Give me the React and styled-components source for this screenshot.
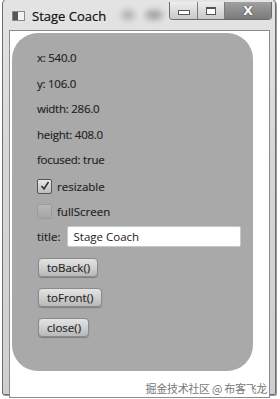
import React from 'react';
import styled, { createGlobalStyle } from 'styled-components';

const GlobalStyle = createGlobalStyle`
  html, body {
    margin: 0;
    padding: 0;
    background: #ffffff;
  }
  body {
    font-family: "Open Sans", "Liberation Sans", sans-serif;
  }
`;

const Page = styled.div`
  width: 280px;
  height: 399px;
  position: relative;
  background: #ffffff;
  overflow: hidden;
`;

const Frame = styled.div`
  position: absolute;
  left: 2px;
  top: -2px;
  width: 274px;
  height: 397px;
  box-sizing: border-box;
  border: 1px solid #6e6e6e;
  border-radius: 6px 6px 2px 2px;
  background: linear-gradient(180deg, #e4e4e4 0%, #d6d6d6 40%, #cfcfcf 100%);
  box-shadow: 1px 1px 0 #9a9a9a;
  display: flex;
  flex-direction: column;
  padding: 0 5px 6px 6px;
`;

const TitleBar = styled.div`
  height: 31px;
  display: flex;
  align-items: center;
  position: relative;
  flex-shrink: 0;
`;

const AppIcon = styled.div`
  width: 11px;
  height: 8px;
  margin: 2px 7px 0 3px;
  border: 1px solid #8a8a8a;
  background: linear-gradient(90deg, #555 0 45%, #f2f2f2 45% 100%);
`;

const Title = styled.span`
  font-family: "Open Sans", "Liberation Sans", sans-serif;
  font-size: 13px;
  color: #111;
  margin-top: 2px;
  -webkit-text-stroke: 0.2px #111;
`;

const Blob = styled.div`
  position: absolute;
  top: 11px;
  width: ${({ w }) => w}px;
  height: 10px;
  left: ${({ x }) => x}px;
  border-radius: 50%;
  background: #9a9a9a;
  filter: blur(3px);
  opacity: ${({ o }) => o};
`;

const WinButtons = styled.div`
  position: absolute;
  right: -2px;
  top: 3px;
  display: flex;
  height: 17px;
  border: 1px solid #6a6a6a;
  border-top: none;
  border-radius: 0 0 4px 4px;
  overflow: hidden;
`;

const WinButton = styled.div`
  width: ${({ w }) => w}px;
  height: 100%;
  display: flex;
  align-items: center;
  justify-content: center;
  border-left: ${({ first }) => (first ? 'none' : '1px solid #7a7a7a')};
  background: ${({ dark }) => (dark
    ? 'linear-gradient(180deg, #a0a0a0 0%, #7a7a7a 100%)'
    : 'linear-gradient(180deg, #eeeeee 0%, #c8c8c8 100%)')};
`;

const MinGlyph = styled.div`
  width: 10px;
  height: 3px;
  border: 1px solid #555;
  background: #fff;
  margin-top: 3px;
`;

const MaxGlyph = styled.div`
  width: 8px;
  height: 5px;
  border: 1px solid #555;
  border-top-width: 2px;
  background: #fff;
`;

const CloseGlyph = styled.span`
  font-family: "DejaVu Sans", sans-serif;
  font-weight: bold;
  font-size: 13px;
  color: #ffffff;
  text-shadow: 0 0 1px #333, 0 0 1px #333;
  line-height: 1;
`;

const Content = styled.div`
  flex: 1;
  background: #ffffff;
  border: 1px solid #8c8c8c;
  padding: 2px 18px 26px 2px;
  position: relative;
`;

const Panel = styled.div`
  width: 241px;
  height: 338px;
  box-sizing: border-box;
  background: #a9a9a9;
  border-radius: 26px;
  padding: 17px 0 0 25px;
  display: flex;
  flex-direction: column;
`;

const Label = styled.div`
  font-family: "Open Sans", "Liberation Sans", sans-serif;
  font-size: 11.5px;
  color: #222;
  height: 25.5px;
  line-height: 16px;
  letter-spacing: -0.25px;
  -webkit-text-stroke: 0.15px #222;
`;

const CheckRow = styled.div`
  display: flex;
  align-items: center;
  height: 25px;
  gap: 5px;
  font-family: "Open Sans", "Liberation Sans", sans-serif;
  font-size: 11.5px;
  color: #222;
  -webkit-text-stroke: 0.15px #222;
  margin-top: -4px;
  margin-bottom: 4px;
`;

const Box = styled.div`
  width: 13px;
  height: 13px;
  border: 1px solid ${({ checked }) => (checked ? '#555' : '#9a9a9a')};
  border-radius: 2px;
  background: ${({ checked }) => (checked ? 'linear-gradient(180deg,#e8e8e8,#bcbcbc)' : 'linear-gradient(180deg,#b8b8b8,#a4a4a4)')};
  display: flex;
  align-items: center;
  justify-content: center;
`;

const TitleRow = styled.div`
  display: flex;
  align-items: center;
  gap: 7px;
  margin-top: -2px;
  font-family: "Open Sans", "Liberation Sans", sans-serif;
  font-size: 11.5px;
  color: #222;
  -webkit-text-stroke: 0.15px #222;
`;

const TextField = styled.div`
  width: 174px;
  height: 21px;
  box-sizing: border-box;
  background: #ffffff;
  border: 1px solid #c8c8c8;
  border-radius: 2px;
  padding: 0 0 0 5px;
  display: flex;
  align-items: center;
  font-size: 11.5px;
  color: #1a1a1a;
  -webkit-text-stroke: 0;
`;

const Buttons = styled.div`
  display: flex;
  flex-direction: column;
  align-items: flex-start;
  gap: 11px;
  margin-top: 11px;
  margin-left: 1px;
`;

const Button = styled.div`
  height: 19px;
  box-sizing: border-box;
  padding: 0 7px 0 8px;
  display: flex;
  align-items: center;
  border: 1px solid #8a8a8a;
  border-radius: 4px;
  background: linear-gradient(180deg, #e4e4e4 0%, #cfcfcf 50%, #b8b8b8 100%);
  box-shadow: 0 1px 1px rgba(0,0,0,0.25);
  font-family: "Open Sans", "Liberation Sans", sans-serif;
  font-size: 11.5px;
  color: #1f1f1f;
  -webkit-text-stroke: 0.15px #1f1f1f;
`;

const Watermark = styled.div`
  position: absolute;
  right: 2px;
  bottom: 1px;
  font-family: "Noto Sans CJK SC", "Liberation Sans", sans-serif;
  font-size: 11px;
  color: #777;
  letter-spacing: -0.3px;
`;

export default function App() {
  return (
    <>
      <GlobalStyle />
      <Page>
        <Frame>
          <TitleBar>
            <AppIcon />
            <Title>Stage Coach</Title>
            <Blob x={112} w={14} o={0.7} />
            <Blob x={136} w={18} o={0.9} />
            <WinButtons>
              <WinButton w={27} first><MinGlyph /></WinButton>
              <WinButton w={26}><MaxGlyph /></WinButton>
              <WinButton w={46} dark><CloseGlyph>X</CloseGlyph></WinButton>
            </WinButtons>
          </TitleBar>
          <Content>
            <Panel>
              <Label>x: 540.0</Label>
              <Label>y: 106.0</Label>
              <Label>width: 286.0</Label>
              <Label>height: 408.0</Label>
              <Label>focused: true</Label>
              <CheckRow>
                <Box checked>
                  <svg width="10" height="10" viewBox="0 0 10 10">
                    <path d="M1.5 5 L4 8 L8.5 1" fill="none" stroke="#333" strokeWidth="1.6" />
                  </svg>
                </Box>
                resizable
              </CheckRow>
              <CheckRow>
                <Box />
                fullScreen
              </CheckRow>
              <TitleRow>
                title:
                <TextField>Stage Coach</TextField>
              </TitleRow>
              <Buttons>
                <Button>toBack()</Button>
                <Button>toFront()</Button>
                <Button>close()</Button>
              </Buttons>
            </Panel>
            <Watermark>掘金技术社区 @ 布客飞龙</Watermark>
          </Content>
        </Frame>
      </Page>
    </>
  );
}
